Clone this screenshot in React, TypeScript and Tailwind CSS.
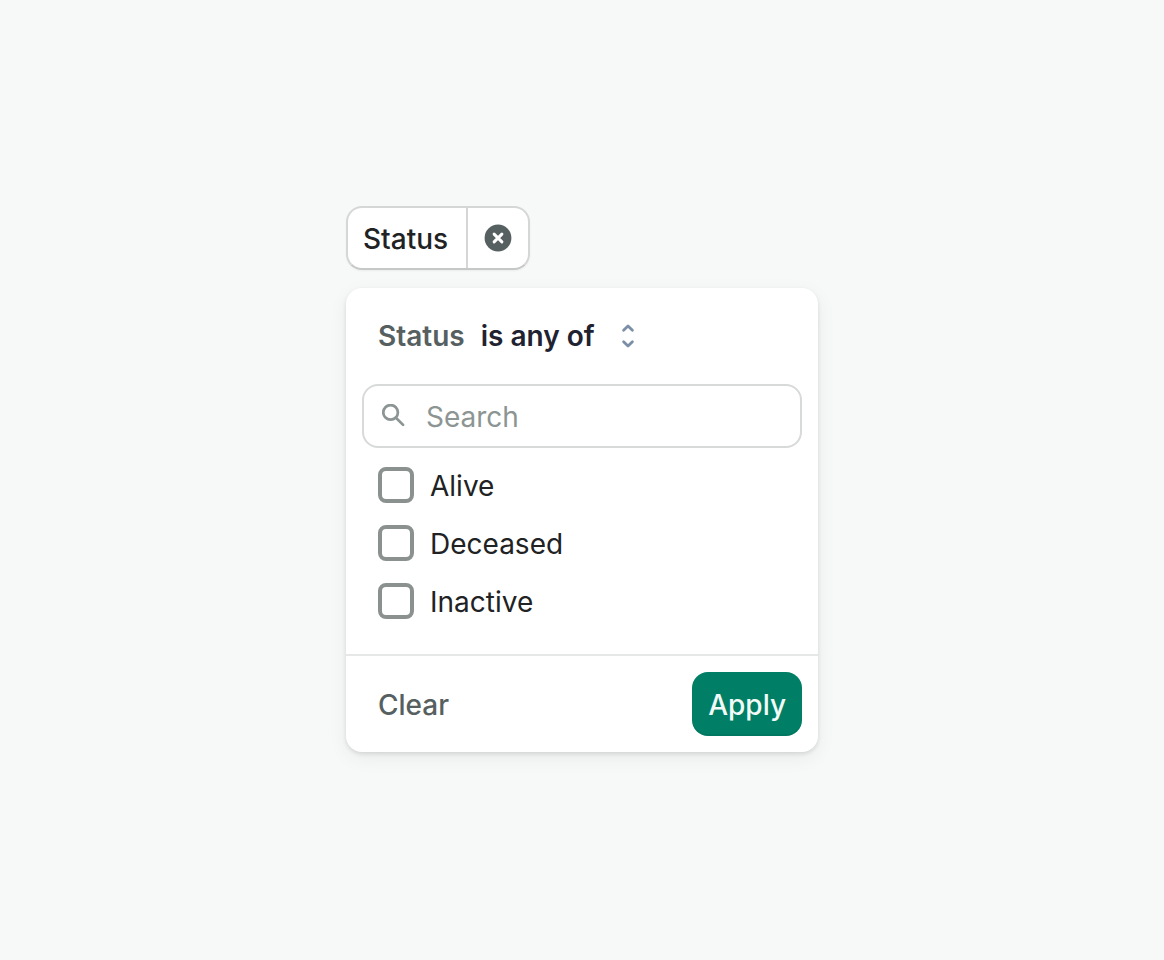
import { useState } from "react";

const statuses = ["Alive", "Deceased", "Inactive"];

function ClearIcon() {
  return (
    <svg viewBox="0 0 28 28" className="h-7 w-7" aria-hidden="true">
      <circle cx="14" cy="14" r="13.4" fill="#566060" />
      <path d="M10.1 10.1l7.8 7.8M17.9 10.1l-7.8 7.8" stroke="#fff" strokeWidth="3" strokeLinecap="round" />
    </svg>
  );
}

function SearchIcon() {
  return (
    <svg viewBox="0 0 24 24" className="h-6 w-6" fill="none" stroke="#8c9594" strokeWidth="2.7" aria-hidden="true">
      <circle cx="8.6" cy="8.4" r="7.3" />
      <path d="M13.9 13.7l7.2 7.2" strokeLinecap="round" />
    </svg>
  );
}

function SelectorIcon() {
  return (
    <svg
      viewBox="0 0 14 26"
      className="h-[26px] w-3.5"
      fill="none"
      stroke="#7b8fa9"
      strokeWidth="2.8"
      strokeLinecap="round"
      strokeLinejoin="round"
      aria-hidden="true"
    >
      <path d="M2.6 7.3L7 3l4.4 4.3" />
      <path d="M2.6 18.7L7 23l4.4-4.3" />
    </svg>
  );
}

export default function App() {
  const [selected, setSelected] = useState<string[]>([]);
  const [query, setQuery] = useState("");

  const toggle = (status: string) => {
    setSelected((prev) =>
      prev.includes(status) ? prev.filter((s) => s !== status) : [...prev, status]
    );
  };

  const visible = statuses.filter((s) => s.toLowerCase().includes(query.toLowerCase()));

  return (
    <main className="flex min-h-screen items-center justify-center bg-[#f7f9f8] px-4 pb-0.5 font-['Inter',sans-serif] text-[28px] leading-10 text-[#202223]">
      <div className="flex w-full max-w-[472px] flex-col items-start gap-[18px]">
        {/* Filter pill */}
        <div className="flex h-16 rounded-2xl border-2 border-[#d5d7d7] border-b-[#c6c8c8] bg-white shadow-[0_1px_2px_rgba(0,0,0,0.05)]">
          <button type="button" className="border-r-2 border-[#d5d7d7] pt-0.5 pr-[18px] pl-[15px] font-medium">
            Status
          </button>
          <button type="button" aria-label="Remove filter" className="flex w-[60px] items-center justify-center">
            <ClearIcon />
          </button>
        </div>

        {/* Popover */}
        <form
          onSubmit={(e) => e.preventDefault()}
          className="w-full rounded-2xl bg-white shadow-[0_2px_4px_rgba(0,0,0,0.11),0_6px_20px_rgba(23,24,24,0.06)]"
        >
          <div className="flex h-24 items-center gap-4 px-8">
            <label htmlFor="operator" className="font-semibold text-[#566060]">
              Status
            </label>
            <div className="relative flex items-center">
              <select
                id="operator"
                className="field-sizing-content appearance-none bg-transparent pr-10 font-semibold text-[#1f2230]"
              >
                <option>is any of</option>
              </select>
              <span className="pointer-events-none absolute right-0">
                <SelectorIcon />
              </span>
            </div>
          </div>

          <div className="px-4">
            <div className="flex h-16 items-center gap-5 rounded-2xl border-2 border-[#d8dada] px-[18px]">
              <SearchIcon />
              <input
                type="text"
                aria-label="Search"
                placeholder="Search"
                value={query}
                onChange={(e) => setQuery(e.target.value)}
                className="min-w-0 flex-1 bg-transparent pt-0.5 outline-none placeholder:text-[#8c9594]"
              />
            </div>
          </div>

          <ul className="flex flex-col gap-4 px-8 pt-4 pb-8">
            {visible.map((status) => (
              <li key={status}>
                <label className="flex items-center gap-4">
                  <input
                    type="checkbox"
                    checked={selected.includes(status)}
                    onChange={() => toggle(status)}
                    className="h-9 w-9 appearance-none rounded-lg border-4 border-[#8a918f] bg-white checked:bg-[#007f66]"
                  />
                  <span className="pt-0.5">{status}</span>
                </label>
              </li>
            ))}
          </ul>

          <div className="flex items-center justify-between border-t-2 border-[#e6e7e7] py-4 pr-4 pl-8">
            <button type="button" onClick={() => setSelected([])} className="pt-0.5 font-medium text-[#566060]">
              Clear
            </button>
            <button
              type="submit"
              className="h-16 rounded-2xl bg-[#007f66] px-4 pt-0.5 font-medium text-[#f3fbf8] shadow-[inset_0_-2px_0_rgba(0,0,0,0.06)]"
            >
              Apply
            </button>
          </div>
        </form>
      </div>
    </main>
  );
}
